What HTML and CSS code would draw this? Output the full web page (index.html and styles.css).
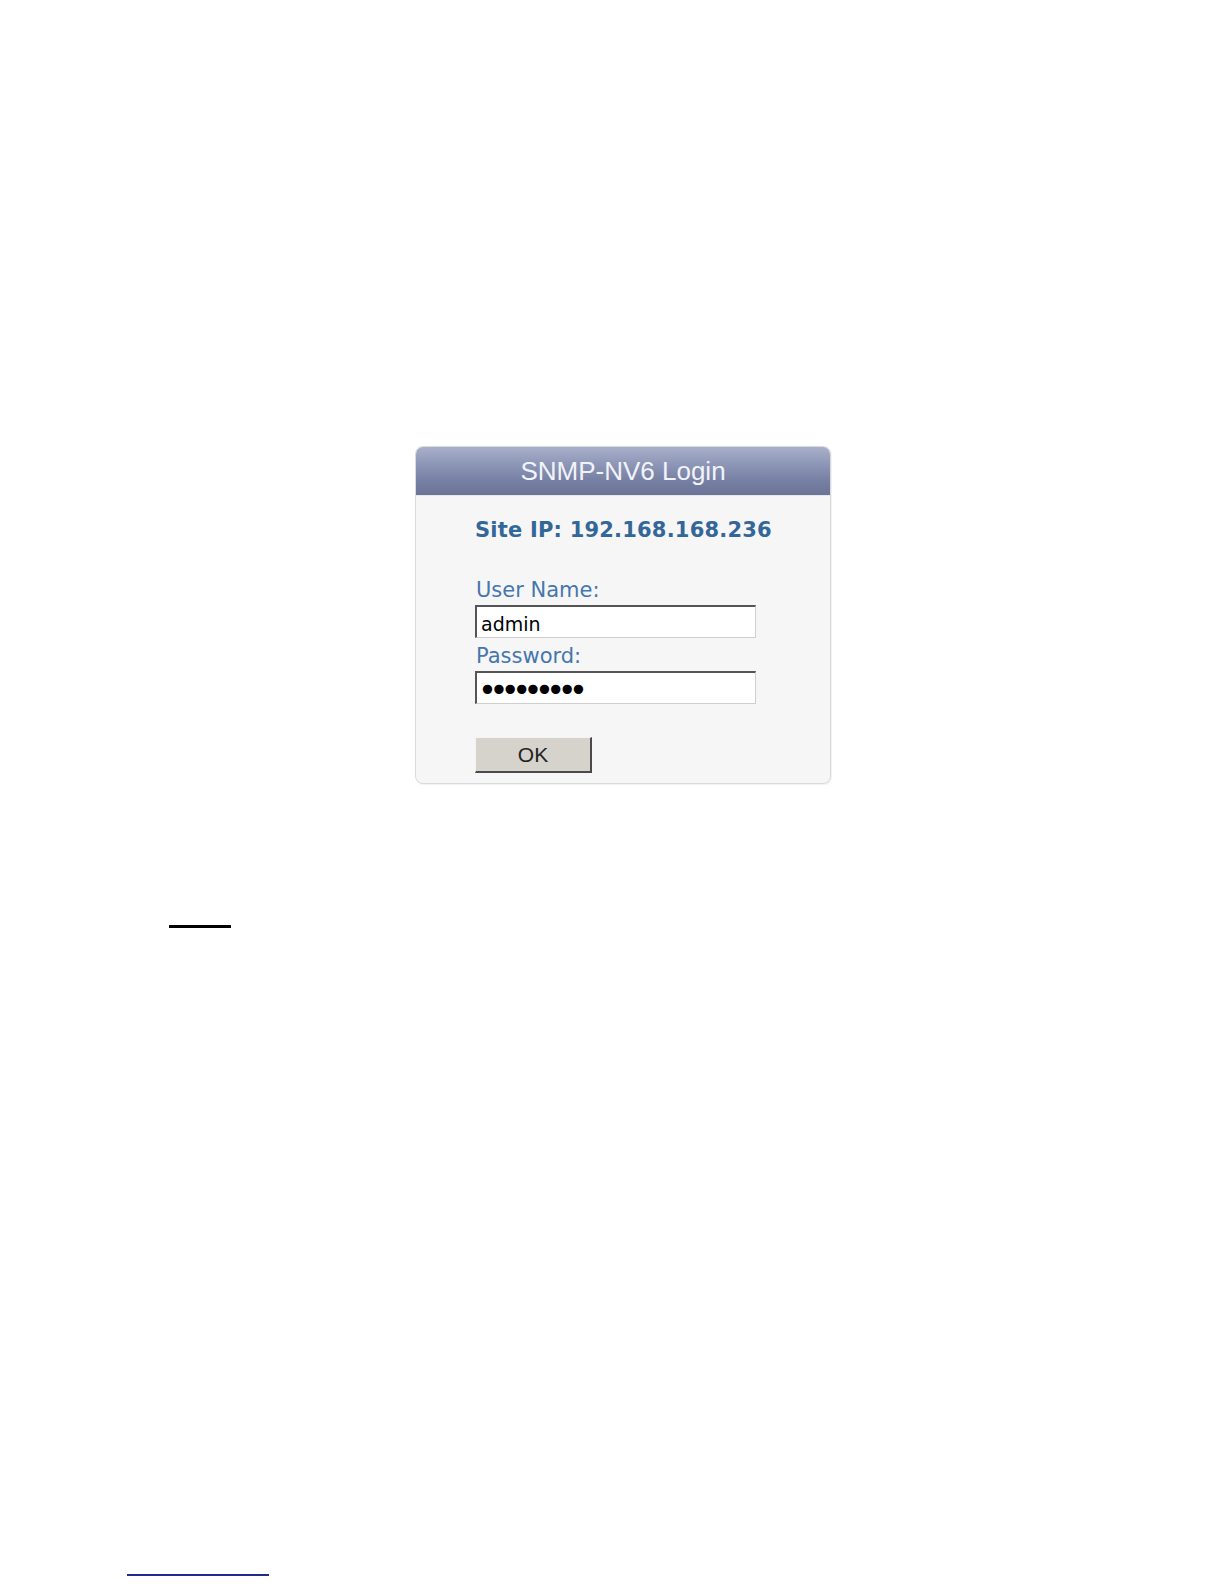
FILE: index.html
```html
<!DOCTYPE html>
<html lang="en">
<head>
<meta charset="utf-8">
<title>SNMP-NV6 Login</title>
<link rel="stylesheet" href="styles.css">
</head>
<body>
<div class="page">
  <form class="panel">
    <div class="panel-head">SNMP-NV6 Login</div>
    <div class="panel-body">
      <div class="site">Site IP: 192.168.168.236</div>
      <label class="lbl lbl-user" for="user">User Name:</label>
      <input class="field" id="user" type="text" value="admin">
      <label class="lbl lbl-pass" for="pass">Password:</label>
      <input class="field field-pass" id="pass" type="password" value="123456789">
      <button class="ok" type="button">OK</button>
    </div>
  </form>
  <div class="rule-black"></div>
  <div class="rule-blue"></div>
</div>
</body>
</html>
```

FILE: styles.css
```css
html, body {
  margin: 0;
  padding: 0;
  background: #ffffff;
}

.page {
  padding-top: 446px;
  height: 1584px;
  box-sizing: border-box;
  overflow: hidden;
}

.panel {
  display: block;
  margin: 0 0 0 415px;
  width: 416px;
  box-sizing: border-box;
  border: 1px solid #d9dadc;
  border-radius: 8px;
  background: #f6f6f6;
  box-shadow: 1px 1px 1px rgba(0, 0, 0, 0.06);
  overflow: hidden;
}

.panel-head {
  height: 49px;
  padding-top: 1px;
  box-sizing: border-box;
  line-height: 47px;
  text-align: center;
  font-family: "Liberation Sans", Arial, sans-serif;
  font-size: 26px;
  color: #f1f3f9;
  background: linear-gradient(to bottom, #a9b0ca 0%, #8e97b7 35%, #7780a3 70%, #6b7497 100%);
  border-bottom: 1px solid #e4e7ee;
}

.panel-body {
  padding: 22px 0 10px 59px;
  display: flex;
  flex-direction: column;
  align-items: flex-start;
}

.site {
  font-family: "DejaVu Sans", Verdana, sans-serif;
  font-weight: bold;
  font-size: 21px;
  line-height: 24px;
  letter-spacing: 0.2px;
  color: #336699;
}

.lbl {
  font-family: "DejaVu Sans", Verdana, sans-serif;
  font-size: 21px;
  line-height: 24px;
  color: #4577ae;
  margin-left: 1px;
}

.lbl-user {
  margin-top: 36px;
}

.lbl-pass {
  margin-top: 6px;
}

.field {
  margin: 3px 0 0 0;
  width: 281px;
  height: 33px;
  box-sizing: border-box;
  border-style: solid;
  border-width: 2px 1px 1px 2px;
  border-color: #555555 #cfcfcf #cfcfcf #555555;
  background: #ffffff;
  padding: 4px 0 0 4px;
  font-family: "DejaVu Sans", Verdana, sans-serif;
  font-size: 19px;
  color: #000000;
  outline: none;
}

.field-pass {
  font-size: 32px;
  letter-spacing: -7.5px;
  padding: 3px 0 0 1px;
}

.ok {
  margin-top: 33px;
  width: 117px;
  height: 36px;
  box-sizing: border-box;
  border-style: solid;
  border-width: 1px 2px 2px 1px;
  border-color: #f4f3ef #4a4a4a #4a4a4a #f4f3ef;
  background: #d6d3cc;
  font-family: "Liberation Sans", Arial, sans-serif;
  font-size: 21px;
  color: #222222;
  padding: 0;
}

.rule-black {
  margin: 141px 0 0 169px;
  width: 62px;
  height: 3px;
  background: #000000;
}

.rule-blue {
  margin: 646px 0 0 127px;
  width: 142px;
  height: 2px;
  background: #1f2a8f;
}
```
